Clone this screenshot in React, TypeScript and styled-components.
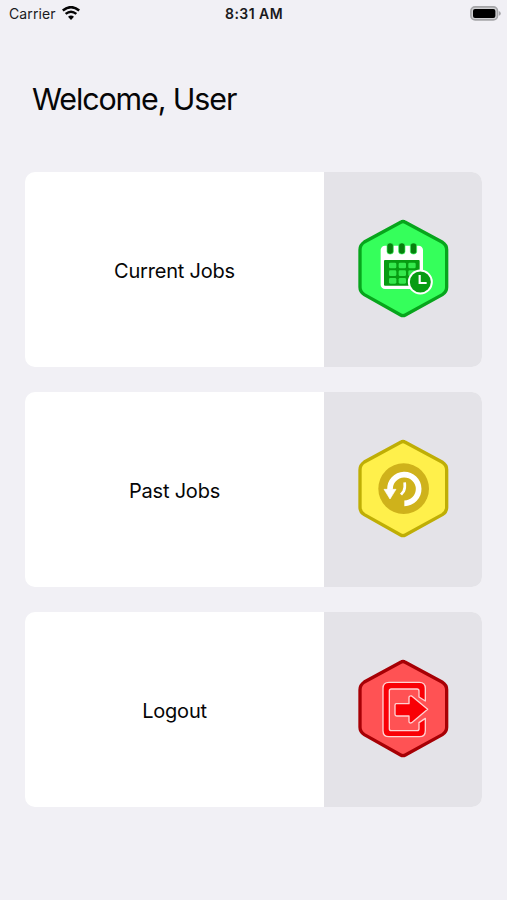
import React from "react";
import styled, { createGlobalStyle } from "styled-components";

const GlobalStyle = createGlobalStyle`
  * { box-sizing: border-box; }
  body {
    margin: 0;
    background: #f1f0f5;
    color: #060607;
    font-family: Inter, "Liberation Sans", sans-serif;
  }
`;

const Screen = styled.div`
  display: flex;
  flex-direction: column;
  width: 507px;
  height: 900px;
  overflow: hidden;
  background: #f1f0f5;
`;

const StatusBar = styled.header`
  display: grid;
  grid-template-columns: 1fr auto 1fr;
  align-items: center;
  height: 28px;
  padding: 0 6px 0 9px;
  color: #1a1a1d;
`;

const Carrier = styled.div`
  display: flex;
  align-items: center;
  gap: 6px;
  font-size: 14px;
  line-height: 28px;
  letter-spacing: 0.12px;
`;

const Clock = styled.div`
  font-size: 14px;
  font-weight: 600;
  line-height: 28px;
  letter-spacing: 0.45px;
  margin-left: -2px;
`;

const Battery = styled.svg`
  justify-self: end;
  margin-top: -2px;
`;

const WifiIcon = styled.svg`
  margin-top: -3px;
`;

const Title = styled.h1`
  margin: 51px 0 0 32px;
  font-size: 30.4px;
  font-weight: 400;
  line-height: 40px;
  letter-spacing: -1.1px;
`;

const Menu = styled.main`
  display: flex;
  flex-direction: column;
  gap: 25px;
  margin: 53px 25px 0;
`;

const Card = styled.button`
  display: flex;
  height: 195px;
  padding: 0;
  border: 0;
  border-radius: 10px;
  overflow: hidden;
  background: #fff;
  color: inherit;
  font: inherit;
`;

const Label = styled.span`
  width: 299px;
  padding-top: 2px;
  align-self: center;
  text-align: center;
  font-size: 20px;
  line-height: 28px;
  letter-spacing: -0.2px;
`;

const IconPanel = styled.span`
  display: flex;
  flex: 1;
  align-self: stretch;
  align-items: center;
  justify-content: center;
  background: #e4e3e8;
  padding-bottom: 3px;
`;

const Badge = ({ fill, stroke, children }: { fill: string; stroke: string; children: React.ReactNode }) => (
  <svg width="106" height="116" viewBox="0 0 318 348" fill="none">
    <path
      d="M152 37Q159 32 166 37L276 96Q290 105 290 119V232Q290 246 277 254L166 315Q159 319 152 315L43 254Q30 246 30 232V119Q30 105 43 96Z"
      fill={fill}
      stroke={stroke}
      strokeWidth="10"
    />
    {children}
  </svg>
);

const CalendarBadge = () => (
  <Badge fill="#35ff5b" stroke="#07a51c">
    <rect x="92" y="107" width="127" height="130" rx="13" fill="#fff" />
    <rect x="102" y="150" width="107" height="77" rx="3" fill="#079c12" />
    {[111, 146, 181].map((x) => (
      <rect key={x} x={x} y="99" width="19" height="33" rx="8" fill="#07800e" stroke="#35ff5b" strokeWidth="2" />
    ))}
    {[158, 181, 204].map((y) =>
      [117, 146, 175].map((x) => (
        <rect key={`${x}-${y}`} x={x} y={y} width="22" height="17" rx="4" fill="#35e94d" />
      ))
    )}
    <circle cx="211" cy="216" r="34.5" fill="#079c12" stroke="#fff" strokeWidth="6" />
    <path d="M209 195V219H230" stroke="#fff" strokeWidth="6.5" />
  </Badge>
);

const HistoryBadge = () => (
  <Badge fill="#fff04b" stroke="#bfae05">
    <circle cx="161" cy="176" r="76" fill="#cfb21b" />
    <path d="M120 179A43 43 0 1 1 163 220" stroke="#fff" strokeWidth="17" />
    <path d="M102 178H138L120 207Z" fill="#fff" stroke="#fff" strokeWidth="2" strokeLinejoin="round" />
    <path d="M164 157Q166 174 161 184L153 194" stroke="#fff" strokeWidth="8" />
  </Badge>
);

const LogoutBadge = () => (
  <Badge fill="#ff5254" stroke="#a70005">
    <path
      d="M226 153V115Q226 97 208 97H117Q99 97 99 115V242Q99 260 117 260H208Q226 260 226 242V205L207 218V236Q207 242 201 242H124Q118 242 118 236V123Q118 117 124 117H201Q207 117 207 123V141Z"
      fill="#f90006"
      stroke="#ffd2d2"
      strokeWidth="4"
      strokeLinejoin="round"
    />
    <path
      d="M139 161H177V141Q179 136 185 138L233 178L185 218Q179 221 177 215V198H140Q135 198 135 193V166Q135 161 139 161Z"
      fill="#f90006"
      stroke="#ffd2d2"
      strokeWidth="4"
      strokeLinejoin="round"
    />
  </Badge>
);

const items = [
  { label: "Current Jobs", Icon: CalendarBadge },
  { label: "Past Jobs", Icon: HistoryBadge },
  { label: "Logout", Icon: LogoutBadge },
];

export default function App() {
  return (
    <Screen>
      <GlobalStyle />
      <StatusBar>
        <Carrier>
          <span>Carrier</span>
          <WifiIcon width="18" height="14" viewBox="0 0 57 44" fill="none" stroke="#050505">
            <path d="M2.5 14Q28.5 -7 54.5 14" strokeWidth="8" />
            <path d="M11.5 25Q28.5 11 45.5 25" strokeWidth="7.5" />
            <path d="M19 34Q28.5 26 38 34L28.5 44Z" fill="#050505" stroke="none" />
          </WifiIcon>
        </Carrier>
        <Clock>8:31 AM</Clock>
        <Battery width="31" height="15" viewBox="0 0 31 15">
          <rect x="0.9" y="0.9" width="26.6" height="13" rx="4.2" fill="#d0d0d3" stroke="#a5a5a8" strokeWidth="1.6" />
          <rect x="3" y="2.9" width="22.4" height="9" rx="2" fill="#000" />
          <path d="M28.8 5Q30.8 5.7 30.8 7.4T28.8 9.8Z" fill="#a5a5a8" />
        </Battery>
      </StatusBar>
      <Title>Welcome, User</Title>
      <Menu>
        {items.map(({ label, Icon }) => (
          <Card key={label} type="button">
            <Label>{label}</Label>
            <IconPanel>
              <Icon />
            </IconPanel>
          </Card>
        ))}
      </Menu>
    </Screen>
  );
}
